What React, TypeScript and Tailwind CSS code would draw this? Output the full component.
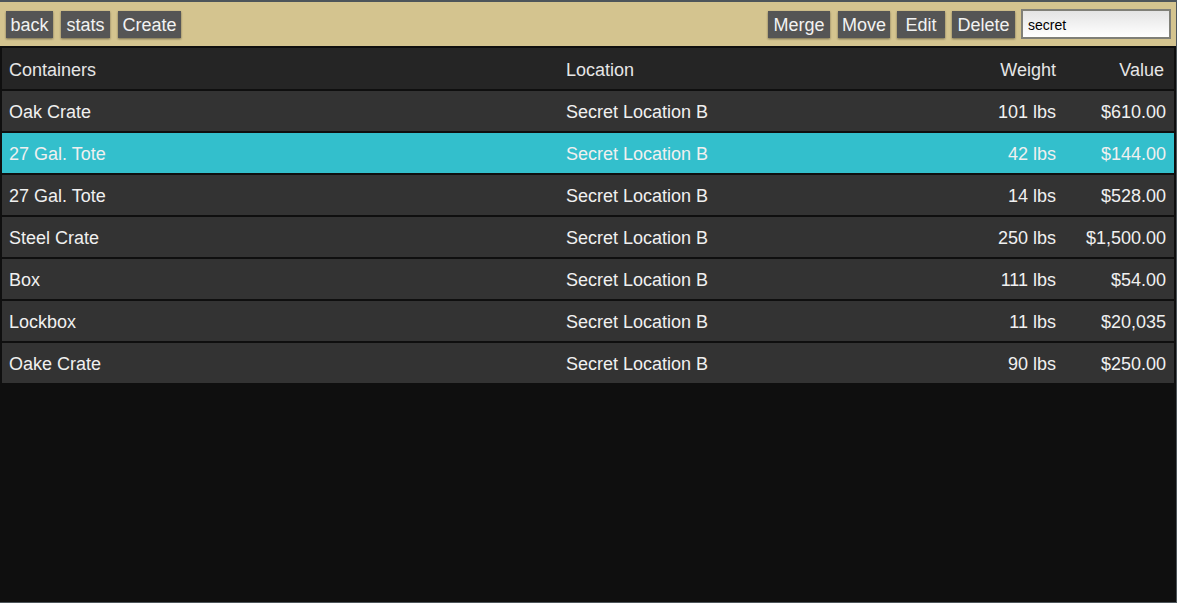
import React from "react";

type Row = { name: string; location: string; weight: string; value: string };

const rows: Row[] = [
  { name: "Oak Crate", location: "Secret Location B", weight: "101 lbs", value: "$610.00" },
  { name: "27 Gal. Tote", location: "Secret Location B", weight: "42 lbs", value: "$144.00" },
  { name: "27 Gal. Tote", location: "Secret Location B", weight: "14 lbs", value: "$528.00" },
  { name: "Steel Crate", location: "Secret Location B", weight: "250 lbs", value: "$1,500.00" },
  { name: "Box", location: "Secret Location B", weight: "111 lbs", value: "$54.00" },
  { name: "Lockbox", location: "Secret Location B", weight: "11 lbs", value: "$20,035" },
  { name: "Oake Crate", location: "Secret Location B", weight: "90 lbs", value: "$250.00" },
];

const Btn = ({ label, w }: { label: string; w: string }) => (
  <button
    className={
      "h-[27px] pt-[1px] bg-[#555555] text-[#f2f2f2] text-[18px] leading-none text-center shadow-[0_1px_2px_rgba(0,0,0,0.45)] " +
      w
    }
  >
    {label}
  </button>
);

export default function App() {
  const selected = 1;

  return (
    <div
      className="h-[603px] w-full bg-[#0f0f0f] border-t-2 border-r border-b border-[#4d555a] flex flex-col"
      style={{ fontFamily: '"Liberation Sans", Arial, sans-serif' }}
    >
      <div className="h-[44px] shrink-0 bg-[#d4c48f] flex items-center pl-[6px] pr-[5px]">
        <div className="flex gap-[8px] mt-[1px]">
          <Btn label="back" w="w-[47px]" />
          <Btn label="stats" w="w-[49px]" />
          <Btn label="Create" w="w-[63px]" />
        </div>
        <div className="ml-auto flex items-center">
          <div className="flex gap-[7px] mt-[1px]">
            <Btn label="Merge" w="w-[62px] mr-[1px]" />
            <Btn label="Move" w="w-[52px]" />
            <Btn label="Edit" w="w-[48px]" />
            <Btn label="Delete" w="w-[63px]" />
          </div>
          <input
            defaultValue="secret"
            className="ml-[6px] w-[150px] h-[30px] border-2 border-[#808078] bg-gradient-to-b from-[#e4e4e4] to-[#ffffff] px-[5px] pt-[2px] text-[14px] text-black outline-none"
          />
        </div>
      </div>

      <div className="flex flex-col gap-[2px] px-[2px] pt-[2px]">
        <div className="h-[41px] pt-[3px] bg-[#252525] grid grid-cols-[557px_1fr_100px_110px] items-center pl-[7px] pr-[8px] text-[18px] text-[#e6e6e6]">
          <span>Containers</span>
          <span>Location</span>
          <span className="text-right">Weight</span>
          <span className="text-right pr-[2px]">Value</span>
        </div>
        {rows.map((r, i) => (
          <div
            key={i}
            className={
              "h-[40px] pt-[2px] grid grid-cols-[557px_1fr_100px_110px] items-center pl-[7px] pr-[8px] text-[18px] text-[#f0f0f0] " +
              (i === selected ? "bg-[#33bfcc]" : "bg-[#333333]")
            }
          >
            <span>{r.name}</span>
            <span>{r.location}</span>
            <span className="text-right">{r.weight}</span>
            <span className="text-right">{r.value}</span>
          </div>
        ))}
      </div>
    </div>
  );
}
